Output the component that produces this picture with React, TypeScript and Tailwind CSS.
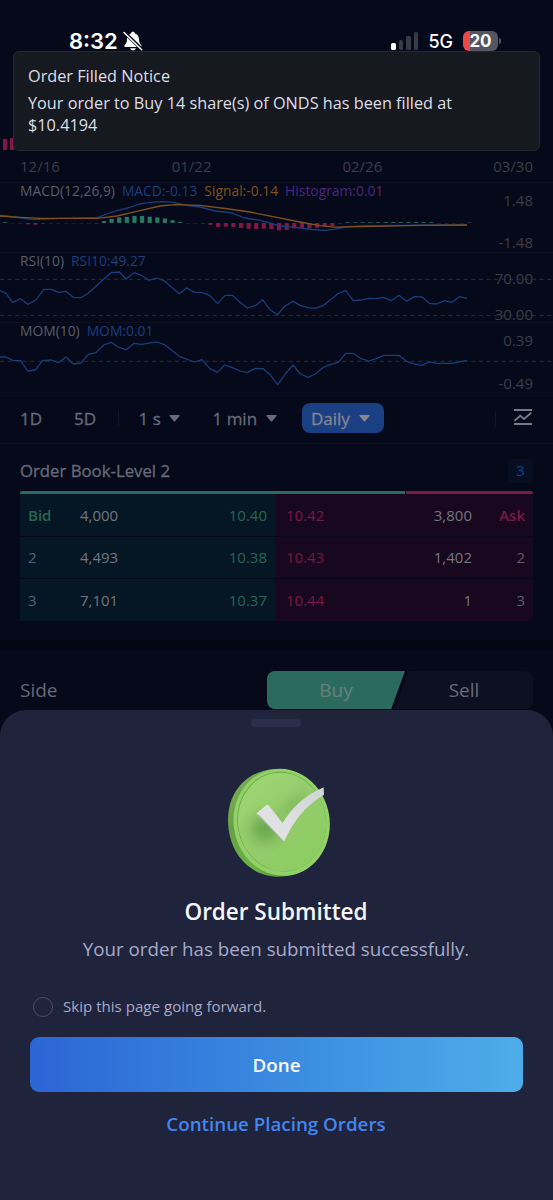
import type { ReactNode } from "react";

const RSI_POINTS =
  "0,422 18,430 38,457 62,446 83,463 108,450 131,418 154,418 175,427 198,424 220,442 243,443 265,429 333,368 358,366 379,387 402,368 424,376 447,391 470,384 492,392 538,431 560,414 583,427 606,427 629,436 653,461 675,436 697,436 720,457 742,474 766,467 788,449 810,479 833,494 855,468 879,454 901,466 924,473 946,475 969,467 1014,431 1037,422 1060,452 1083,450 1106,445 1129,446 1151,442 1174,452 1197,436 1220,454 1243,440 1266,441 1288,460 1310,462 1334,452 1356,457 1378,440 1401,445";

const MOM_POINTS =
  "0,621 18,621 38,631 62,632 83,663 106,660 128,632 154,630 175,638 198,621 220,642 243,639 265,613 288,608 311,585 333,577 356,592 379,599 402,580 424,583 470,576 492,583 538,619 583,636 606,629 629,655 652,667 674,645 697,653 720,663 742,668 765,655 790,656 810,674 833,704 856,672 879,645 901,672 924,682 946,672 970,652 992,643 1015,637 1037,610 1060,610 1083,626 1106,633 1129,626 1151,616 1197,616 1220,634 1243,642 1265,646 1288,636 1310,640 1356,640 1401,631";

const MACD_POINTS =
  "0,215.5 15,217 33,219.6 45,219.2 60,218.3 97,217.7 107,214 117,210.7 128,208 140,203.8 150,202.4 162,201.6 172,202.2 185,205 200,207 215,211 225,212 232,213 243,217.3 250,219 260,220.2 270,223 280,226 290,226.8 300,228 312,229.5 325,230.4 335,229.2 345,227 360,226 420,225.2 467,225";

const SIGNAL_POINTS =
  "0,216 20,217.3 40,218.4 97,218.3 117,216 140,210.7 160,206 175,204.6 200,205.4 225,208.5 250,212 273,216.7 300,222 320,225.6 335,227.2 360,226.6 420,225.4 467,225";

// Signed bar heights, starting at the left edge, one every 7.6px.
const HISTOGRAM = [
  0.7, -0.4, -0.4, -1.3, -1.7, -0.7, -0.4, -0.4, -0.4, -0.4, -0.4, -0.4, -0.6, 1.9, 4, 5.5, 6, 7, 7, 6.2,
  5.5, 4.4, 2.6, 1, -0.4, -0.4, -0.6, -1.8, -4, -3.8, -4, -5, -5.7, -6, -5.5, -6, -7.4, -7, -5.4, -5, -5,
  -4.7, -3.7, -3, -0.6, 0.7, 0.5, 0.5, 0.7, 0.7, 0.8, 0.8, 0.8, 0.8, 0.8, 0.8, 0.7, -0.4, -0.4, -0.4, -0.4, 0.4,
];

function Panel({
  top,
  art,
  children,
  high,
  low,
  pad,
}: {
  top: number;
  art: ReactNode;
  children: ReactNode;
  high: string;
  low: string;
  pad: string;
}) {
  return (
    <section className="relative flex h-[70px] justify-between border-t border-[#0c0f20] px-[20px]">
      <svg className="absolute -top-px left-0 h-[72px] w-[553px]" viewBox={`0 ${top} 553 72`} fill="none">
        {art}
      </svg>
      <div className="relative flex gap-[7px] pt-[1px] text-[13.85px] leading-[14px] text-[#5a5c6b]">{children}</div>
      <div className={`relative flex flex-col justify-between text-right text-[15px] leading-[16px] text-[#3b3d49] ${pad}`}>
        <span>{high}</span>
        <span>{low}</span>
      </div>
    </section>
  );
}

function Dashes({ y }: { y: number }) {
  return <path d={`M0 ${y}H553`} stroke="#2b2d3b" strokeWidth="1" strokeDasharray="4 3.6" />;
}

function Caret() {
  return (
    <svg className="h-[7px] w-[11px]" viewBox="0 0 11 7">
      <path d="M.8 0h9.4q.8.3.3 1L6.2 6.3q-.7.6-1.4 0L.5 1Q0 .3.8 0Z" fill="currentColor" />
    </svg>
  );
}

const BOOK = [
  { left: "Bid", bidSize: "4,000", bid: "10.40", ask: "10.42", askSize: "3,800", right: "Ask" },
  { left: "2", bidSize: "4,493", bid: "10.38", ask: "10.43", askSize: "1,402", right: "2" },
  { left: "3", bidSize: "7,101", bid: "10.37", ask: "10.44", askSize: "1", right: "3" },
];

function StatusBar() {
  return (
    <header className="flex h-[139px] items-start justify-between pt-[28px] pr-[52px] pl-[69px] font-['Inter',sans-serif] text-white">
      <div className="flex items-center gap-[5px]">
        <span className="text-[22px] leading-[26px] font-semibold">8:32</span>
        <svg className="h-[20px] w-[20px]" viewBox="0 0 20 20">
          <path
            d="M10 .8c1 0 1.8.7 2 1.6 2.500.8 3.900 2.900 4 5.600.1 3.500.9 4.700 2.200 6 .9 1 .5 2-.7 2h-15c-1.200 0-1.600-1-.7-2 1.300-1.300 2.100-2.500 2.200-6 .1-2.700 1.500-4.800 4-5.600.2-.9 1-1.600 2-1.600ZM7.200 17.200h5.600c-.3 1.300-1.400 2.100-2.800 2.100s-2.500-.8-2.800-2.100Z"
            fill="white"
          />
          <path d="M2 2 19 18.500" stroke="#070a1b" strokeWidth="3.600" />
          <path d="M1 1.500 18.700 18.700" stroke="white" strokeWidth="1.500" strokeLinecap="round" />
        </svg>
      </div>
      <div className="flex items-center pt-px">
        <div className="flex h-[18px] items-end gap-[3px]">
          <i className="h-[7px] w-[5px] rounded-[1.5px] bg-white" />
          <i className="h-[10px] w-[4.5px] rounded-[1.5px] bg-[#383a47]" />
          <i className="h-[14px] w-[4.5px] rounded-[1.5px] bg-[#383a47]" />
          <i className="h-[18px] w-[4.5px] rounded-[1.5px] bg-[#383a47]" />
        </div>
        <span className="ml-[10px] pt-[2px] text-[18px] leading-[22px] font-medium">5G</span>
        <div className="ml-[10px] flex h-[20px] w-[35px] items-center justify-center rounded-[6px] bg-[linear-gradient(90deg,#ea4a47_7px,#535562_7px)] text-[17px] leading-[20px] font-bold">
          20
        </div>
        <i className="ml-[1px] h-[6px] w-[2px] rounded-r-full bg-[#535562]" />
      </div>
    </header>
  );
}

function SuccessArt() {
  return (
    <svg className="h-[140px] w-[140px]" viewBox="0 0 420 420">
      <defs>
        <linearGradient id="rim" x1="0" y1="0" x2=".7" y2="1">
          <stop offset="0" stopColor="#7db355" />
          <stop offset=".4" stopColor="#66a046" />
          <stop offset=".75" stopColor="#6bb443" />
          <stop offset="1" stopColor="#55933a" />
        </linearGradient>
        <linearGradient id="face" x1=".2" y1="0" x2=".8" y2="1">
          <stop offset="0" stopColor="#9fd673" />
          <stop offset=".5" stopColor="#95cc6c" />
          <stop offset="1" stopColor="#8bcd5f" />
        </linearGradient>
        <radialGradient id="shade">
          <stop offset="0" stopColor="#5f9a45" stopOpacity=".75" />
          <stop offset=".3" stopColor="#639f48" stopOpacity=".6" />
          <stop offset=".65" stopColor="#6faa50" stopOpacity=".25" />
          <stop offset="1" stopColor="#7fbb57" stopOpacity="0" />
        </radialGradient>
        <linearGradient id="tick" x1="1" y1="0" x2="0" y2="1">
          <stop offset="0" stopColor="#d0d3d4" />
          <stop offset=".5" stopColor="#dcdedf" />
          <stop offset="1" stopColor="#e4e5e7" />
        </linearGradient>
      </defs>
      <path d="M196 57C108 62 54 126 54 211c0 92 60 169 152 169 50 0 90-20 118-58L290 90Z" fill="url(#rim)" />
      <ellipse cx="215" cy="217" rx="144" ry="161" transform="rotate(-10 215 217)" fill="#92d167" />
      <ellipse cx="215" cy="215" rx="133" ry="150" transform="rotate(-10 215 215)" fill="#6dab4a" />
      <ellipse cx="216" cy="216" rx="131.500" ry="148.500" transform="rotate(-10 216 216)" fill="url(#face)" />
      <ellipse cx="165" cy="236" rx="80" ry="78" fill="url(#shade)" />
      <ellipse cx="250" cy="164" rx="90" ry="46" transform="rotate(-38 250 164)" fill="url(#shade)" opacity=".4" />
      <path d="M139 191 222 276 226 268 148 185Z" fill="#b5b9b9" />
      <path d="m139 191 32-27 6 3-29 27Z" fill="#eeeeef" />
      <path
        d="M143 190 175 165C189 181 205 203 218 219 246 172 290 133 341 112L342 134C294 164 257 199 223 274 197 247 172 219 143 190Z"
        fill="url(#tick)"
      />
    </svg>
  );
}

export default function App() {
  return (
    <div className="relative h-[1200px] w-[553px] overflow-hidden bg-[#060919] font-['Open_Sans',sans-serif]">
      <StatusBar />
      <div className="flex h-[11px] items-end gap-[3px] pl-[3px]">
        <i className="h-[11px] w-[4px] bg-[#821744]" />
        <i className="h-[12px] w-[4px] bg-[#821744]" />
      </div>

      <div className="flex h-[32px] items-center justify-between px-[20px] text-[15px] leading-[20px] text-[#3b3d49]">
        <span>12/16</span>
        <span className="ml-[2px]">01/22</span>
        <span className="mr-[-19px] ml-[21px]">02/26</span>
        <span className="ml-[20px]">03/30</span>
      </div>

      <Panel
        top={182}
        high="1.48"
        low="-1.48"
        pad="pt-[9px] pb-[2px]"
        art={
          <>
            {HISTOGRAM.map((h, i) => (
              <rect
                key={i}
                x={3 + i * 7.61}
                y={h > 0 ? 222.9 - h : 223}
                width="4.2"
                height={Math.abs(h)}
                fill={h > 0 ? "#287767" : "#821744"}
              />
            ))}
            <polyline points={MACD_POINTS} stroke="#173f7c" strokeWidth="1.3" />
            <polyline points={SIGNAL_POINTS} stroke="#80521b" strokeWidth="1.3" />
          </>
        }
      >
        <span>MACD(12,26,9)</span>
        <span className="text-[#173f7c]">MACD:-0.13</span>
        <span className="text-[#80521b]">Signal:-0.14</span>
        <span className="text-[#4c2681]">Histogram:0.01</span>
      </Panel>

      <Panel
        top={252}
        high="70.00"
        low="30.00"
        pad="pt-[17px]"
        art={
          <>
            <Dashes y={279.3} />
            <Dashes y={315.6} />
            <polyline
              points={RSI_POINTS}
              transform="translate(0 150) scale(.33333)"
              stroke="#173f7c"
              strokeWidth="3.8"
              strokeLinejoin="round"
            />
          </>
        }
      >
        <span>RSI(10)</span>
        <span className="text-[#173f7c]">RSI10:49.27</span>
      </Panel>

      <Panel
        top={322}
        high="0.39"
        low="-0.49"
        pad="pt-[9px] pb-[1px]"
        art={
          <>
            <Dashes y={361.3} />
            <polyline
              points={MOM_POINTS}
              transform="translate(0 150) scale(.33333)"
              stroke="#173f7c"
              strokeWidth="3.8"
              strokeLinejoin="round"
            />
          </>
        }
      >
        <span>MOM(10)</span>
        <span className="text-[#173f7c]">MOM:0.01</span>
      </Panel>

      <nav className="flex h-[52px] items-center border-y border-[#0c0f20] px-[20px] text-[17px] leading-[24px] text-[#686a79] [-webkit-text-stroke:0.3px]">
        <span className="w-[54px] pt-px">1D</span>
        <span className="w-[44px] pt-px">5D</span>
        <i className="mr-[19.5px] h-[16px] w-px bg-[#111426]" />
        <span className="flex w-[74px] items-center gap-[8px] pt-px">
          1 s <Caret />
        </span>
        <span className="flex w-[89.5px] items-center gap-[9px] pt-px">
          1 min <Caret />
        </span>
        <span className="flex h-[30px] w-[82px] items-center gap-[9px] rounded-[8px] bg-[#1a4083] pt-px pl-[9px] text-[#868590]">
          Daily <Caret />
        </span>
        <i className="ml-auto h-[16px] w-px bg-[#111426]" />
        <svg className="mr-px mb-[2px] ml-[18px] h-[18px] w-[18px]" viewBox="0 0 18 18" fill="none" stroke="#777986" strokeWidth="1.8">
          <path d="M0 2H18M0 16H18M.5 12.800 6.300 7.800 10 11 17.300 4.800" />
        </svg>
      </nav>

      <section className="px-[20px]">
        <div className="flex h-[47px] items-center justify-between pt-[6px]">
          <h2 className="text-[16.75px] leading-[24px] text-[#686a79] [-webkit-text-stroke:0.3px]">Order Book-Level 2</h2>
          <span className="flex h-[24px] w-[25px] items-center justify-center rounded-[3px] bg-[#070e22] text-[15px] text-[#174484]">
            3
          </span>
        </div>
        <div className="flex h-[3px] gap-px">
          <i className="w-[385px] rounded-tl-[2px] bg-[#2b6b5f]" />
          <i className="flex-1 rounded-tr-[2px] bg-[#7a1a45]" />
        </div>
        <div className="flex flex-col gap-px text-[15px] leading-[20px] text-[#73767f]">
          {BOOK.map((row, i) => (
            <div key={row.left} className="flex h-[41.7px]">
              <div className="flex w-[255px] items-center bg-[#051724] px-[8px] pb-[0.6px]">
                <span className={i === 0 ? "w-[52px] font-semibold text-[#256653]" : "w-[52px] text-[#566170]"}>{row.left}</span>
                <span>{row.bidSize}</span>
                <span className="ml-auto text-[#256653]">{row.bid}</span>
              </div>
              <div className="flex flex-1 items-center bg-[#17071f] pr-[8px] pb-[0.6px] pl-[11px]">
                <span className="text-[#7c1845]">{row.ask}</span>
                <span className="ml-auto">{row.askSize}</span>
                <span className={i === 0 ? "w-[53px] text-right font-semibold text-[#7c1845]" : "w-[53px] text-right text-[#625b6e]"}>
                  {row.right}
                </span>
              </div>
            </div>
          ))}
        </div>
      </section>

      <div className="mt-[19px] h-[11px] bg-[#040614]" />

      <section className="flex items-center justify-between px-[20px] pt-[20px] text-[19px] leading-[24px] text-[#686a79]">
        <span>Side</span>
        <div className="flex h-[38px] w-[266px]">
          <div className="relative z-10 mr-[-15px] flex w-[138px] items-center justify-center rounded-l-[8px] bg-[#2b6b5f] text-[#687f82] [clip-path:polygon(0_0,100%_0,90%_100%,0_100%)]">
            Buy
          </div>
          <div className="flex flex-1 items-center justify-center rounded-r-[8px] bg-[#0c1021] pl-[5px] [clip-path:polygon(13%_0,100%_0,100%_100%,3%_100%)]">
            Sell
          </div>
        </div>
      </section>

      <aside className="absolute top-[51px] left-[13px] h-[100px] w-[527px] rounded-[6px] border border-[#252731] bg-[#171920] px-[14px] pt-[13px] text-[16.25px] text-[#dedee6]">
        <h3 className="leading-[22px]">Order Filled Notice</h3>
        <p className="mt-[5px] leading-[22px]">
          Your order to Buy 14 share(s) of ONDS has been filled at
          <br />
          $10.4194
        </p>
      </aside>

      <main className="absolute top-[710px] left-0 flex h-[490px] w-[553px] flex-col items-center rounded-t-[26px] bg-[#1f233b] px-[30px]">
        <i className="mt-[9px] mr-px h-[8px] w-[50px] rounded-full bg-[#2a2e4a]" />
        <div className="mt-[23px] ml-[7px]">
          <SuccessArt />
        </div>
        <h1 className="mt-[7px] mr-px text-[22.5px] leading-[30px] font-semibold text-[#f5f6fb]">Order Submitted</h1>
        <p className="mt-[9px] mr-px text-[18.75px] leading-[26px] text-[#a7aac8]">Your order has been submitted successfully.</p>
        <label className="mt-[33px] flex w-full items-center gap-[10px] pl-[3px] text-[15.1px] leading-[22px] text-[#a7aac8]">
          <i className="mt-[2px] h-[20px] w-[20px] rounded-full border-[1.5px] border-[#484c67]" />
          Skip this page going forward.
        </label>
        <button className="mt-[20px] h-[55px] w-full rounded-[9px] bg-linear-to-r from-[#2c65d5] to-[#4eade9] pt-px text-[18.75px] font-semibold text-white">
          Done
        </button>
        <button className="mt-[19px] mr-px text-[18.75px] leading-[26px] font-semibold text-[#4385f0]">Continue Placing Orders</button>
      </main>
    </div>
  );
}
